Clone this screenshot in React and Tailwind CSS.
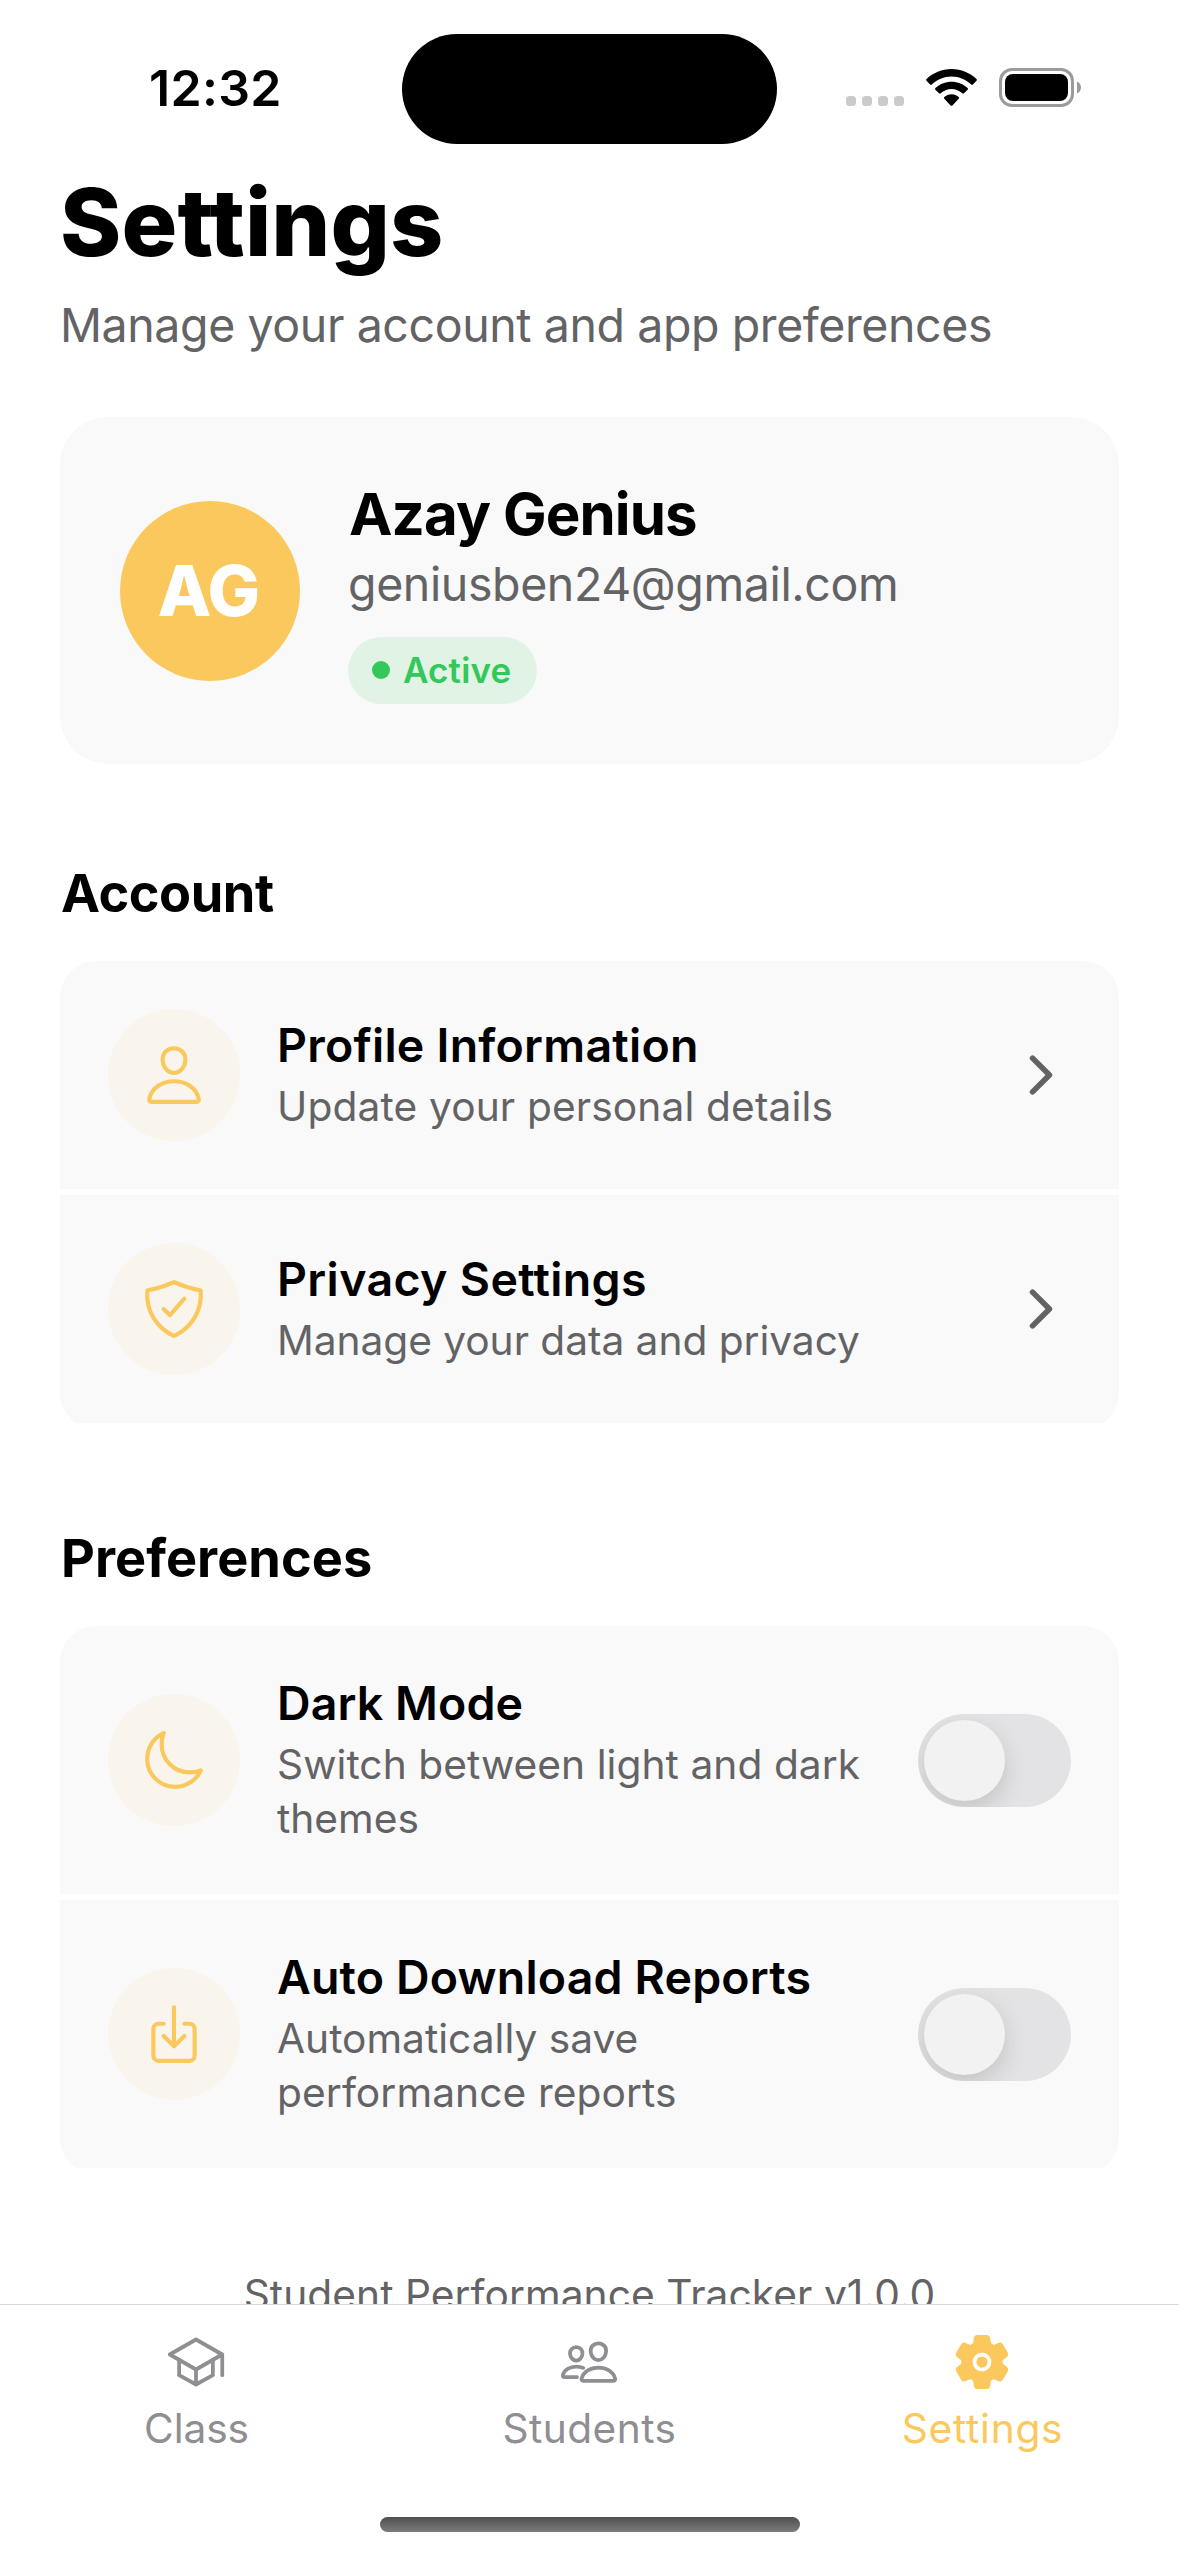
import React from 'react'
import { IoChevronForward, IoDownloadOutline, IoMoonOutline, IoPeopleOutline, IoPersonOutline, IoSchoolOutline, IoSettings, IoShieldCheckmarkOutline } from 'react-icons/io5'

function StatusBar() {
  return (
    <div className="flex h-[165px] items-start">
      <div className="w-[402px] pt-[58px] pl-[149px] text-[50px] leading-[60px] font-semibold tracking-[0.3px]">12:32</div>
      <div className="mt-[34px] h-[110px] w-[375px] rounded-full bg-black" />
      <div className="ml-[69px] flex h-[39px] mt-[68px]">
        <div className="mt-[28px] flex gap-[6px]">
          {[0, 1, 2, 3].map((i) => (
            <span key={i} className="size-[10px] rounded-[3.5px] bg-[#cbcbcb]" />
          ))}
        </div>
        <svg className="ml-[22px] mt-[1px] h-[37px] w-[51px]" viewBox="0 0 51 37">
          <path d="M25.5 0C35.2 0 44 3.8 50.5 10.1c.5.5.5 1.2 0 1.7l-3.6 3.7c-.5.5-1.2.5-1.7 0C40 10.5 33 7.5 25.500 7.500S11 10.500 5.800 15.500c-.5.5-1.200.5-1.700 0L.5 11.800c-.5-.5-.5-1.200 0-1.700C7 3.800 15.800 0 25.500 0z" />
          <path d="M25.500 12.700c6.200 0 11.900 2.400 16.100 6.300.5.5.5 1.200 0 1.700L38 24.300c-.5.5-1.200.5-1.700 0-2.900-2.600-6.700-4.200-10.800-4.200s-7.900 1.600-10.800 4.200c-.5.5-1.200.5-1.700 0l-3.600-3.600c-.5-.5-.5-1.200 0-1.700 4.200-3.900 9.900-6.300 16.100-6.300z" />
          <path d="M25.500 25.300c2.800 0 5.300 1.100 7.200 2.800.5.5.5 1.200 0 1.700l-6.300 6.600c-.5.5-1.300.5-1.800 0l-6.300-6.600c-.5-.5-.5-1.200 0-1.700 1.900-1.700 4.400-2.800 7.200-2.800z" />
        </svg>
        <svg className="ml-[22px] h-[39px] w-[83px]" viewBox="0 0 83 39">
          <rect x="1.500" y="1.500" width="72" height="36" rx="11.500" fill="none" stroke="#9b9b9b" strokeWidth="3" />
          <rect x="6" y="6" width="63" height="27" rx="8" />
          <path d="M78 13.500c2.400 1 4 3.200 4 6s-1.600 5-4 6z" fill="#9b9b9b" />
        </svg>
      </div>
    </div>
  )
}

function Toggle() {
  return (
    <div className="h-[93px] w-[153px] shrink-0 overflow-hidden rounded-full bg-[#e3e3e5] p-[6px]">
      <div className="size-[81px] rounded-full bg-[#f2f2f2] shadow-[0_9px_24px_rgba(0,0,0,0.14)]" />
    </div>
  )
}

function Chevron() {
  return <IoChevronForward className="size-[60px] text-[#636366]" />
}

function Row({ icon: Icon, title, titleClass, lines, control }) {
  return (
    <div className="mb-[6px] flex items-center bg-[#f9f9f9] p-[48px]">
      <div className="flex size-[132px] shrink-0 items-center justify-center rounded-full bg-[#f9f4ec]">
        <Icon className="size-[66px] text-[#fac85c]" />
      </div>
      <div className="ml-[37px] flex-1 whitespace-nowrap">
        <h3 className={'mb-[6px] text-[46.5px] leading-[58px] font-semibold ' + titleClass}>{title}</h3>
        {lines.map(([text, cls]) => (
          <p key={text} className={'text-[40.7px] leading-[54px] text-[#636366] ' + cls}>{text}</p>
        ))}
      </div>
      {control}
    </div>
  )
}

function Section({ title, titleClass, children }) {
  return (
    <section className="mt-[97px]">
      <h2 className={'mb-[36px] pl-px text-[52.3px] leading-[64px] font-bold ' + titleClass}>{title}</h2>
      <div className="overflow-hidden rounded-[36px]">{children}</div>
    </section>
  )
}

function Tab({ icon: Icon, label, cls }) {
  return (
    <div className={'flex flex-1 flex-col items-center gap-[10px] ' + cls}>
      <Icon className="mr-px size-[60px]" />
      <span className="text-[40.7px] leading-[54px]">{label}</span>
    </div>
  )
}

export default function App() {
  return (
    <div className="h-[2556px] w-[1179px] overflow-hidden bg-white font-['Inter',sans-serif] text-black">
      <div className="h-[2304px] overflow-hidden">
        <StatusBar />
        <main className="px-[60px]">
          <h1 className="text-[93px] leading-[114px] font-extrabold tracking-[0.07px]">Settings</h1>
          <p className="mt-[17px] whitespace-nowrap text-[46.5px] leading-[58px] tracking-[-0.41px] text-[#636366]">Manage your account and app preferences</p>

          <div className="mt-[63px] flex h-[347px] items-center rounded-[48px] bg-[#f9f9f9] px-[60px]">
            <div className="flex size-[180px] items-center justify-center rounded-full bg-[#fac85c] pr-[3px] text-[70px] font-extrabold tracking-[-0.59px] text-white">AG</div>
            <div className="ml-[48px]">
              <div className="ml-[1px] text-[58.2px] leading-[72px] font-bold tracking-[-0.89px]">Azay Genius</div>
              <div className="mt-[5px] text-[46.5px] leading-[58px] tracking-[-0.39px] text-[#636366]">geniusben24@gmail.com</div>
              <div className="mt-[24px] flex h-[67px] w-[189px] items-center rounded-full bg-[#e1f3e5] pl-[24px]">
                <span className="size-[18px] rounded-full bg-[#34c759]" />
                <span className="ml-[13px] text-[35px] leading-[44px] font-semibold tracking-[0.15px] text-[#34c759]">Active</span>
              </div>
            </div>
          </div>

          <Section title="Account" titleClass="tracking-[-0.43px]">
            <Row icon={IoPersonOutline} title="Profile Information" titleClass="tracking-[0.24px]" lines={[['Update your personal details', 'tracking-[0.13px]']]} control={<Chevron />} />
            <Row icon={IoShieldCheckmarkOutline} title="Privacy Settings" titleClass="tracking-[0.35px]" lines={[['Manage your data and privacy', 'tracking-[-0.05px]']]} control={<Chevron />} />
          </Section>

          <Section title="Preferences" titleClass="tracking-[0.04px]">
            <Row icon={IoMoonOutline} title="Dark Mode" titleClass="tracking-[0.08px]" lines={[['Switch between light and dark', 'tracking-[0.05px]'], ['themes', '']]} control={<Toggle />} />
            <Row icon={IoDownloadOutline} title="Auto Download Reports" titleClass="tracking-[0.16px]" lines={[['Automatically save', ''], ['performance reports', 'tracking-[0.1px]']]} control={<Toggle />} />
          </Section>

          <p className="mt-[94px] text-center text-[40.7px] leading-[54px] tracking-[0.05px] text-[#636366]">Student Performance Tracker v1.0.0</p>
        </main>
      </div>

      <nav className="h-[252px] border-t border-[#d8d8d8] bg-white">
        <div className="flex pt-[27px]">
          <Tab icon={IoSchoolOutline} label="Class" cls="text-[#8e8e93] tracking-[-0.1px]" />
          <Tab icon={IoPeopleOutline} label="Students" cls="text-[#8e8e93] tracking-[0.42px]" />
          <Tab icon={IoSettings} label="Settings" cls="text-[#fac85c] tracking-[0.74px]" />
        </div>
        <div className="mx-auto mt-[61px] h-[15px] w-[420px] rounded-full bg-linear-to-b from-[#505050] to-[#7c7c7c]" />
      </nav>
    </div>
  )
}
